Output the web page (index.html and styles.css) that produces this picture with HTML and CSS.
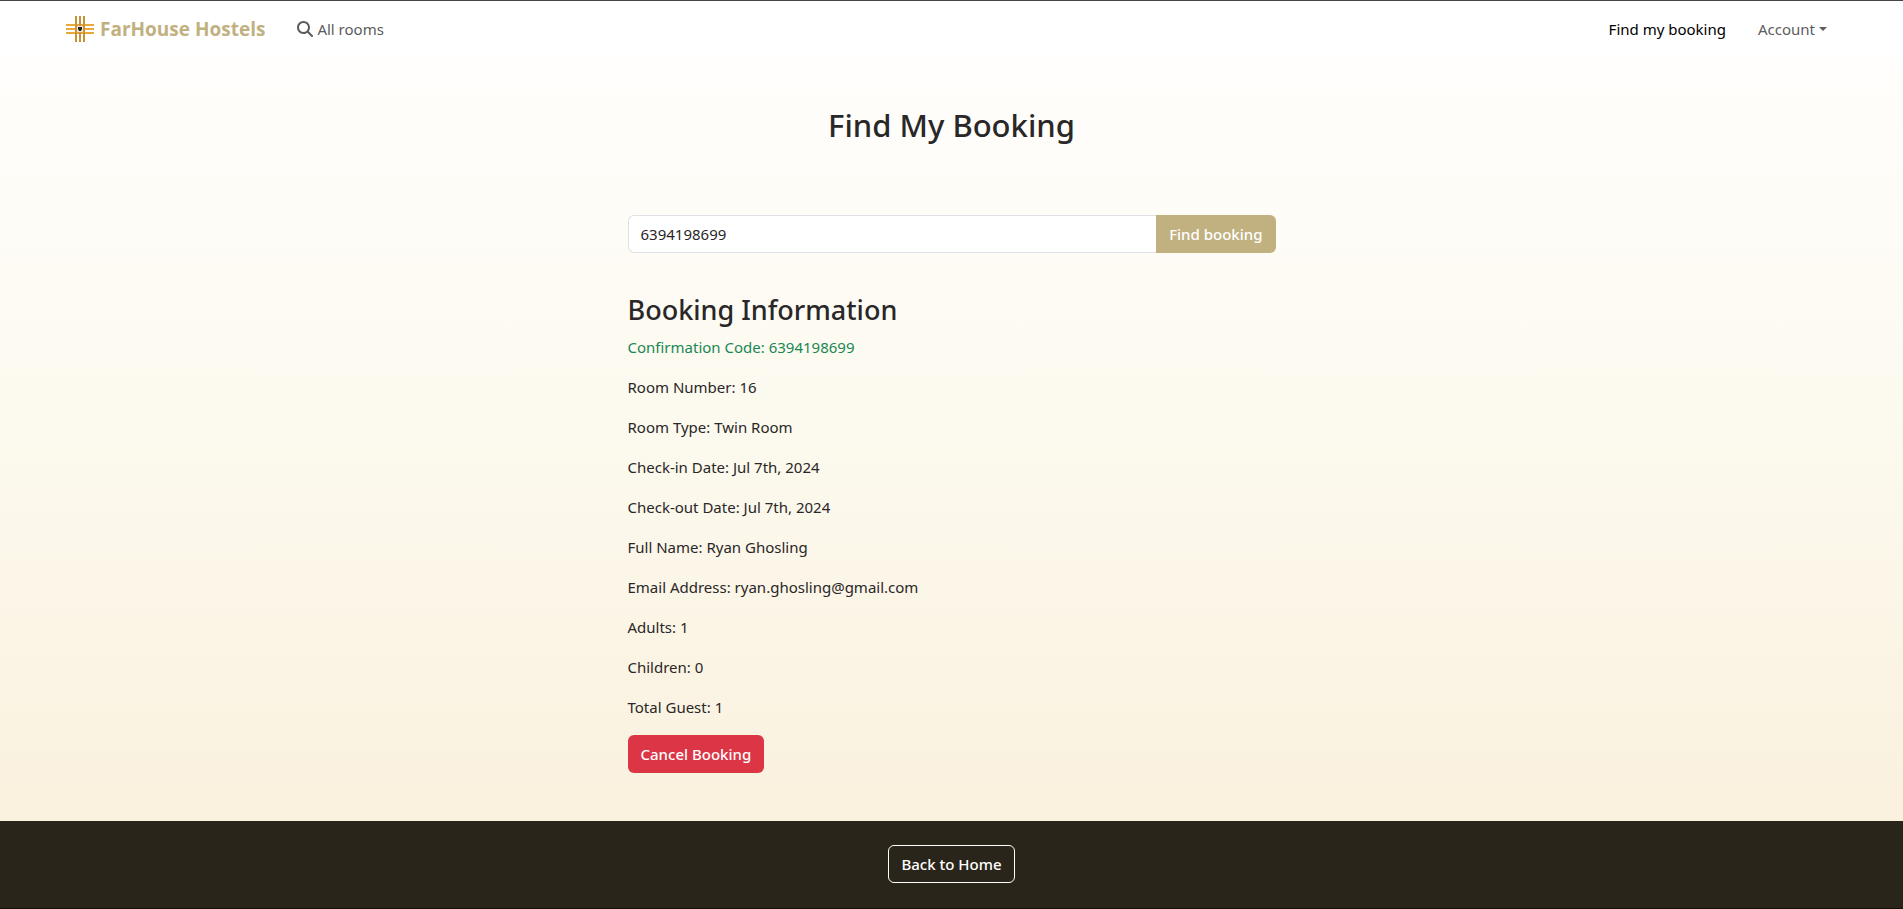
FILE: index.html
```html
<!DOCTYPE html>
<html lang="en">
<head>
<meta charset="utf-8">
<title>FarHouse Hostels - Find My Booking</title>
<meta name="viewport" content="width=device-width, initial-scale=1">
<link rel="stylesheet" href="styles.css">
</head>
<body>
<header class="navbar">
  <a class="brand" href="#">
    <svg class="brand-logo" viewBox="0 0 28 28" aria-hidden="true">
      <g fill="#e9a93a"><path d="M0 9h28v2H0zM0 13h28v2H0zM0 17h28v2H0z"/></g>
      <g fill="#c8923a"><path d="M9 1h2v26H9zM13 1h2v26h-2zM17 1h2v26h-2z"/></g>
      <path d="M11 11h6v6h-6z" fill="#f3ead8"/>
      <path d="M12 12h4v2l-1 2h-2l-1-2z" fill="#222"/>
    </svg>
    <span>FarHouse Hostels</span>
  </a>
  <nav class="nav">
    <a class="nav-link" href="#">
      <svg class="search-icon" viewBox="0 0 512 512" aria-hidden="true"><path fill="currentColor" d="M416 208c0 45.900-14.900 88.300-40 122.700L502.600 457.400c12.500 12.500 12.500 32.800 0 45.300s-32.800 12.500-45.300 0L330.700 376c-34.400 25.200-76.800 40-122.700 40C93.100 416 0 322.900 0 208S93.100 0 208 0S416 93.100 416 208zM208 352a144 144 0 1 0 0-288 144 144 0 1 0 0 288z"/></svg>
      <span>All rooms</span>
    </a>
  </nav>
  <nav class="nav nav-end">
    <a class="nav-link active" href="#">Find my booking</a>
    <button class="nav-link toggle" type="button">Account</button>
  </nav>
</header>
<main class="page">
  <h1 class="title">Find My Booking</h1>
  <section class="booking">
    <form class="search">
      <input class="field" type="text" name="code" value="6394198699" aria-label="Confirmation code">
      <button class="btn btn-gold" type="button">Find booking</button>
    </form>
    <h2 class="subtitle">Booking Information</h2>
    <p class="row success">Confirmation Code: 6394198699</p>
    <p class="row">Room Number: 16</p>
    <p class="row">Room Type: Twin Room</p>
    <p class="row">Check-in Date: Jul 7th, 2024</p>
    <p class="row">Check-out Date: Jul 7th, 2024</p>
    <p class="row">Full Name: Ryan Ghosling</p>
    <p class="row">Email Address: ryan.ghosling@gmail.com</p>
    <p class="row">Adults: 1</p>
    <p class="row">Children: 0</p>
    <p class="row">Total Guest: 1</p>
    <button class="btn btn-danger" type="button">Cancel Booking</button>
  </section>
</main>
<footer class="footer">
  <a class="btn btn-outline" href="#">Back to Home</a>
</footer>
</body>
</html>
```
FILE: styles.css
```css
* {
  box-sizing: border-box;
}

body {
  margin: 0;
  min-height: 100vh;
  display: flex;
  flex-direction: column;
  font-family: "Noto Sans", "Open Sans", sans-serif;
  font-size: 15px;
  line-height: 24px;
  color: #292727;
  background: #ffffff;
}

a {
  text-decoration: none;
}

.navbar {
  display: flex;
  align-items: center;
  height: 58px;
  padding: 0 68px 2px 66px;
  border-top: 1px solid #454545;
  background: #ffffff;
}

.brand {
  display: flex;
  align-items: center;
  gap: 6px;
  margin-right: 24px;
  font-family: "Open Sans", "Noto Sans", sans-serif;
  font-size: 19px;
  font-weight: 700;
  color: #c1b180;
}

.brand-logo {
  width: 28px;
  height: 28px;
}

.nav {
  display: flex;
  gap: 16px;
}

.nav-end {
  margin-left: auto;
}

.nav-link {
  display: flex;
  align-items: center;
  gap: 4px;
  padding: 8px;
  border: 0;
  background: none;
  font: inherit;
  color: #5c5c5c;
}

.nav-link.active {
  color: #000000;
}

.search-icon {
  width: 16px;
  height: 16px;
}

.toggle {
  cursor: pointer;
}

.toggle::after {
  content: "";
  border-top: 4px solid;
  border-left: 4px solid transparent;
  border-right: 4px solid transparent;
}

.page {
  flex: 1;
  padding: 47px 24px 48px;
  background: linear-gradient(#fffefc, #fcf9ee 50%, #faf1de);
}

.title {
  margin: 0 0 70px;
  font-size: 31px;
  font-weight: 500;
  line-height: 40px;
  text-align: center;
}

.booking {
  width: 100%;
  max-width: 648px;
  margin: 0 auto;
}

.search {
  display: flex;
  margin-bottom: 40px;
}

.field {
  flex: 1;
  min-width: 0;
  padding: 6px 12px;
  border: 1px solid #dee2e6;
  border-right: 0;
  border-radius: 6px 0 0 6px;
  background: #ffffff;
  font: inherit;
  color: inherit;
}

.subtitle {
  margin: 0 0 8px;
  font-size: 27px;
  font-weight: 500;
  line-height: 34px;
}

.row {
  margin: 0 0 16px;
}

.success {
  color: #198754;
}

.btn {
  display: inline-block;
  padding: 6px 12px;
  border: 1px solid transparent;
  border-radius: 6px;
  font: inherit;
  font-weight: 500;
  color: #ffffff;
  cursor: pointer;
}

.btn-gold {
  border-radius: 0 6px 6px 0;
  background: #c1b180;
}

.btn-danger {
  background: #dc3545;
}

.btn-outline {
  border-color: #ffffff;
}

.footer {
  display: flex;
  justify-content: center;
  padding: 24px 24px 25px;
  border-bottom: 1px solid #12100c;
  background: #2a251a;
}
```
